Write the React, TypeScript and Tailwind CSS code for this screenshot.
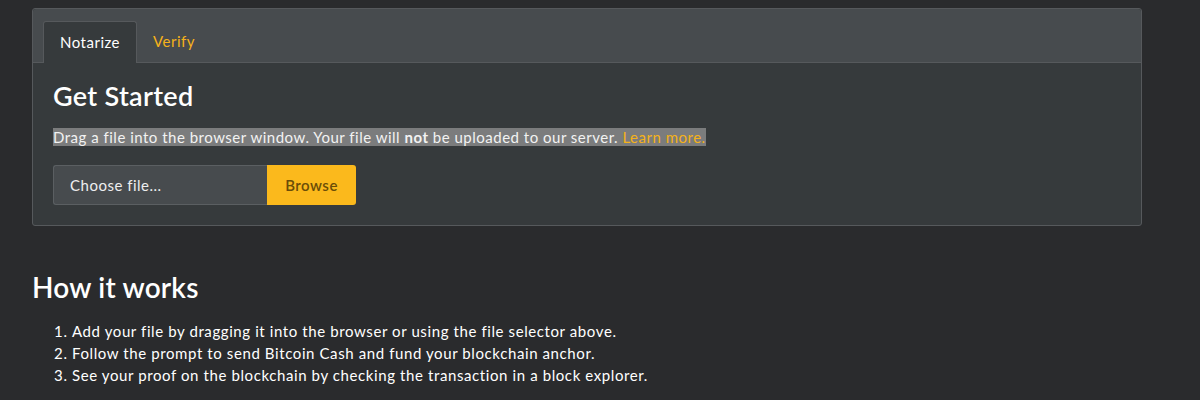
import React, { useState } from "react";

const App = () => {
  const [tab, setTab] = useState("notarize");

  return (
    <div
      className="min-h-screen w-full bg-[#2a2b2d] text-white tracking-[0.5px]"
      style={{ fontFamily: "Lato, 'Open Sans', sans-serif" }}
    >
      <div className="px-[32px] pt-[8px]">
        <div className="w-[1110px] rounded-[3px] border border-[#56595c] bg-[#363a3c]">
          <div className="flex h-[54px] items-end rounded-t-[3px] border-b border-[#56595c] bg-[#474b4e] px-[10px]">
            <button
              onClick={() => setTab("notarize")}
              className="-mb-px h-[42px] rounded-t-[3px] border border-b-0 border-[#56595c] bg-[#363a3c] px-[16px] text-[15px] text-white"
            >
              Notarize
            </button>
            <button
              onClick={() => setTab("verify")}
              className="h-[42px] px-[16px] text-[15px] text-[#f5b21a]"
            >
              Verify
            </button>
          </div>
          <div className="px-[20px] pt-[16px] pb-[20px]">
            <h2 className="text-[27px] font-semibold leading-[34px] tracking-[0.3px]">Get Started</h2>
            <p className="mt-[14px] text-[15px] leading-[20px]">
              <span className="bg-[#7b7c7d] text-[#f2f2f2]">
                Drag a file into the browser window. Your file will <b>not</b> be uploaded to our server.{" "}
                <a className="text-[#f5b21a]">Learn more.</a>
              </span>
            </p>
            <div className="mt-[18px] flex">
              <div className="flex h-[40px] w-[214px] items-center rounded-l-[3px] border border-r-0 border-[#5b5f62] bg-[#474b4e] px-[16px] text-[15px] text-[#eeeeee]">
                Choose file...
              </div>
              <button className="h-[40px] w-[89px] rounded-r-[3px] bg-[#fbb91c] text-[15px] font-semibold text-[#6a4d08]">
                Browse
              </button>
            </div>
          </div>
        </div>

        <h2 className="mt-[43px] text-[28px] font-semibold leading-[36px] tracking-[0.2px]">How it works</h2>
        <ol className="mt-[15px] list-decimal pl-[40px] text-[15px] leading-[22px] tracking-[0.6px]">
          <li>Add your file by dragging it into the browser or using the file selector above.</li>
          <li>Follow the prompt to send Bitcoin Cash and fund your blockchain anchor.</li>
          <li>See your proof on the blockchain by checking the transaction in a block explorer.</li>
        </ol>
      </div>
    </div>
  );
};

export default App;
